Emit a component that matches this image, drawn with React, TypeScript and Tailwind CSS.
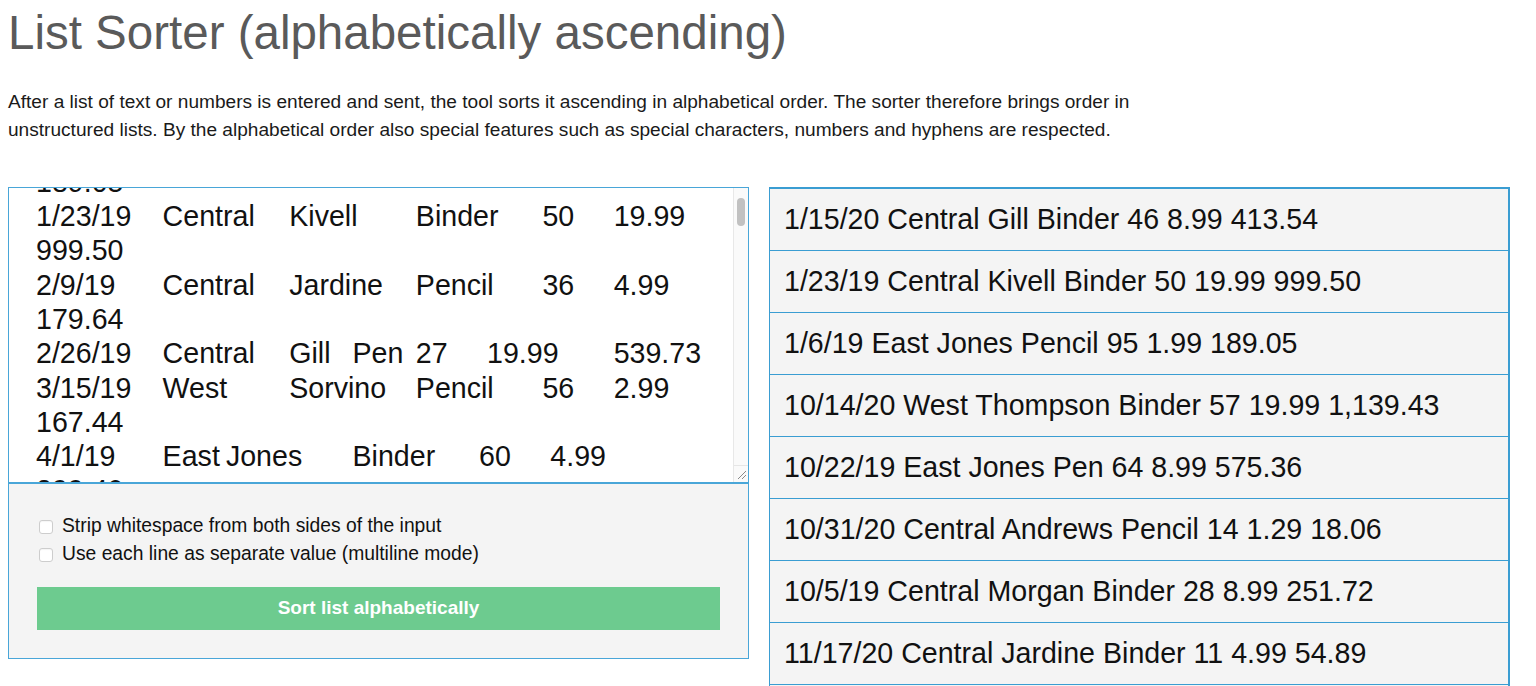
import React, { useEffect, useRef } from "react";

const rows: string[][] = [
  ["1/6/19", "East", "Jones", "Pencil", "95", "1.99", "189.05"],
  ["1/23/19", "Central", "Kivell", "Binder", "50", "19.99", "999.50"],
  ["2/9/19", "Central", "Jardine", "Pencil", "36", "4.99", "179.64"],
  ["2/26/19", "Central", "Gill", "Pen", "27", "19.99", "539.73"],
  ["3/15/19", "West", "Sorvino", "Pencil", "56", "2.99", "167.44"],
  ["4/1/19", "East", "Jones", "Binder", "60", "4.99", "299.40"],
  ["4/18/19", "Central", "Andrews", "Pencil", "75", "1.99", "149.25"],
  ["5/5/19", "Central", "Jardine", "Pencil", "90", "4.99", "449.10"],
  ["5/22/19", "West", "Thompson", "Pencil", "32", "1.99", "63.68"],
  ["6/8/19", "East", "Jones", "Binder", "60", "8.99", "539.40"],
  ["6/25/19", "Central", "Morgan", "Pencil", "90", "4.99", "449.10"],
  ["7/12/19", "East", "Howard", "Binder", "29", "1.99", "57.71"],
  ["7/29/19", "East", "Parent", "Binder", "81", "19.99", "1,619.19"],
  ["8/15/19", "East", "Jones", "Pencil", "35", "4.99", "174.65"],
  ["9/1/19", "Central", "Smith", "Desk", "2", "125.00", "250.00"],
  ["9/18/19", "East", "Jones", "Pen Set", "16", "15.99", "255.84"],
  ["10/5/19", "Central", "Morgan", "Binder", "28", "8.99", "251.72"],
  ["10/22/19", "East", "Jones", "Pen", "64", "8.99", "575.36"],
  ["11/8/19", "East", "Parent", "Pen", "15", "19.99", "299.85"],
  ["11/25/19", "Central", "Kivell", "Pen Set", "96", "4.99", "479.04"],
  ["12/12/19", "Central", "Smith", "Pencil", "67", "1.29", "86.43"],
  ["12/29/19", "East", "Parent", "Pen Set", "74", "15.99", "1,183.26"],
  ["1/15/20", "Central", "Gill", "Binder", "46", "8.99", "413.54"],
  ["2/1/20", "Central", "Smith", "Binder", "87", "15.00", "1,305.00"],
  ["2/18/20", "East", "Jones", "Binder", "4", "4.99", "19.96"],
  ["3/7/20", "West", "Sorvino", "Binder", "7", "19.99", "139.93"],
  ["3/24/20", "Central", "Jardine", "Pen Set", "50", "4.99", "249.50"],
  ["4/10/20", "Central", "Andrews", "Pencil", "66", "1.99", "131.34"],
  ["4/27/20", "East", "Howard", "Pen", "96", "4.99", "479.04"],
  ["5/14/20", "Central", "Gill", "Pencil", "53", "1.29", "68.37"],
  ["5/31/20", "Central", "Gill", "Binder", "80", "8.99", "719.20"],
  ["6/17/20", "Central", "Kivell", "Desk", "5", "125.00", "625.00"],
  ["7/4/20", "East", "Jones", "Pen Set", "62", "4.99", "309.38"],
  ["7/21/20", "Central", "Morgan", "Pen Set", "55", "12.49", "686.95"],
  ["8/7/20", "Central", "Kivell", "Pen Set", "42", "23.95", "1,005.90"],
  ["8/24/20", "West", "Sorvino", "Desk", "3", "275.00", "825.00"],
  ["9/10/20", "Central", "Gill", "Pencil", "7", "1.29", "9.03"],
  ["9/27/20", "West", "Sorvino", "Pen", "76", "1.99", "151.24"],
  ["10/14/20", "West", "Thompson", "Binder", "57", "19.99", "1,139.43"],
  ["10/31/20", "Central", "Andrews", "Pencil", "14", "1.29", "18.06"],
  ["11/17/20", "Central", "Jardine", "Binder", "11", "4.99", "54.89"],
  ["12/4/20", "Central", "Jardine", "Binder", "94", "19.99", "1,879.06"],
  ["12/21/20", "Central", "Andrews", "Binder", "28", "4.99", "139.72"],
];

const inputText = rows
  .map((r) => `${r[0]}\t${r[1]}\t${r[2]}\t${r[3]}\t${r[4]}\t ${r[5]} \t ${r[6]} `)
  .join("\n");

const sorted = rows
  .map((r) => r.join(" "))
  .sort((a, b) => (a < b ? -1 : a > b ? 1 : 0));

export default function App() {
  const ref = useRef<HTMLTextAreaElement>(null);
  useEffect(() => {
    if (ref.current) ref.current.scrollTop = 67;
  }, []);

  return (
    <div className="h-[686px] overflow-hidden bg-white font-['Liberation_Sans',Arial,sans-serif] text-[#111]">
      <div className="px-2">
        <h1 className="mt-[9px] text-[47.5px] leading-none font-normal text-[#5a5a5a]">
          List Sorter (alphabetically ascending)
        </h1>
        <p className="mt-[31px] whitespace-nowrap text-[19.1px] leading-[28px] text-[#1a1a1a]">
          After a list of text or numbers is entered and sent, the tool sorts it ascending in alphabetical order. The sorter therefore brings order in
          <br />
          unstructured lists. By the alphabetical order also special features such as special characters, numbers and hyphens are respected.
        </p>

        <div className="mt-[43px] flex items-start gap-5">
          {/* Left panel */}
          <div className="w-[741px] border border-[#49a6d8] bg-[#f4f4f4]">
            <div className="relative">
              <textarea
                ref={ref}
                spellCheck={false}
                defaultValue={inputText}
                className="block h-[296px] w-full resize-none overflow-y-scroll border-b-2 border-[#49a6d8] bg-white pt-[10px] pb-[10px] pl-[27px] pr-[36px] text-[28.6px] leading-[34.3px] text-[#111] outline-none [tab-size:63.3px]"
              />
              {/* scrollbar + resize grip overlay */}
              <div className="pointer-events-none absolute top-0 right-0 bottom-[2px] flex w-[15px] flex-col border-l border-[#e8e8e8] bg-[#fafafa]">
                <div className="mx-auto mt-[10px] h-[28px] w-[8px] rounded-full bg-[#c1c1c1]" />
                <div className="mt-auto flex h-[17px] items-end justify-end border-t border-[#e6e6e6] bg-[#fafafa]">
                  <svg width="10" height="10" viewBox="0 0 10 10" className="mr-[1px] mb-[2px]">
                    <line x1="1" y1="9" x2="9" y2="1" stroke="#8a8a8a" strokeWidth="1" />
                    <line x1="5" y1="9" x2="9" y2="5" stroke="#8a8a8a" strokeWidth="1" />
                  </svg>
                </div>
              </div>
            </div>
            <div className="px-[28px] pt-[29px] pb-[28px]">
              <label className="flex h-[28px] items-center gap-[9px] pl-[2px] text-[19.3px] text-[#111]">
                <span className="block h-[14px] w-[14px] rounded-[3px] border border-[#cdcdcd] bg-white shadow-[inset_0_1px_1px_rgba(0,0,0,0.04)]" />
                Strip whitespace from both sides of the input
              </label>
              <label className="flex h-[28px] items-center gap-[9px] pl-[2px] text-[19.3px] text-[#111]">
                <span className="block h-[14px] w-[14px] rounded-[3px] border border-[#cdcdcd] bg-white shadow-[inset_0_1px_1px_rgba(0,0,0,0.04)]" />
                Use each line as separate value (multiline mode)
              </label>
              <button className="mt-[18px] flex h-[43px] w-full items-center justify-center bg-[#6dcb8f] text-[19px] font-bold text-white">
                Sort list alphabetically
              </button>
            </div>
          </div>

          {/* Right panel */}
          <ul className="w-[741px] border-t-2 border-r-2 border-l border-[#3a9dd2]">
            {sorted.map((s) => (
              <li
                key={s}
                className="flex h-[62px] items-center border-b border-[#3a9dd2] bg-[#f4f4f4] pl-[14px] text-[28.6px] text-[#111]"
              >
                {s}
              </li>
            ))}
          </ul>
        </div>
      </div>
    </div>
  );
}
